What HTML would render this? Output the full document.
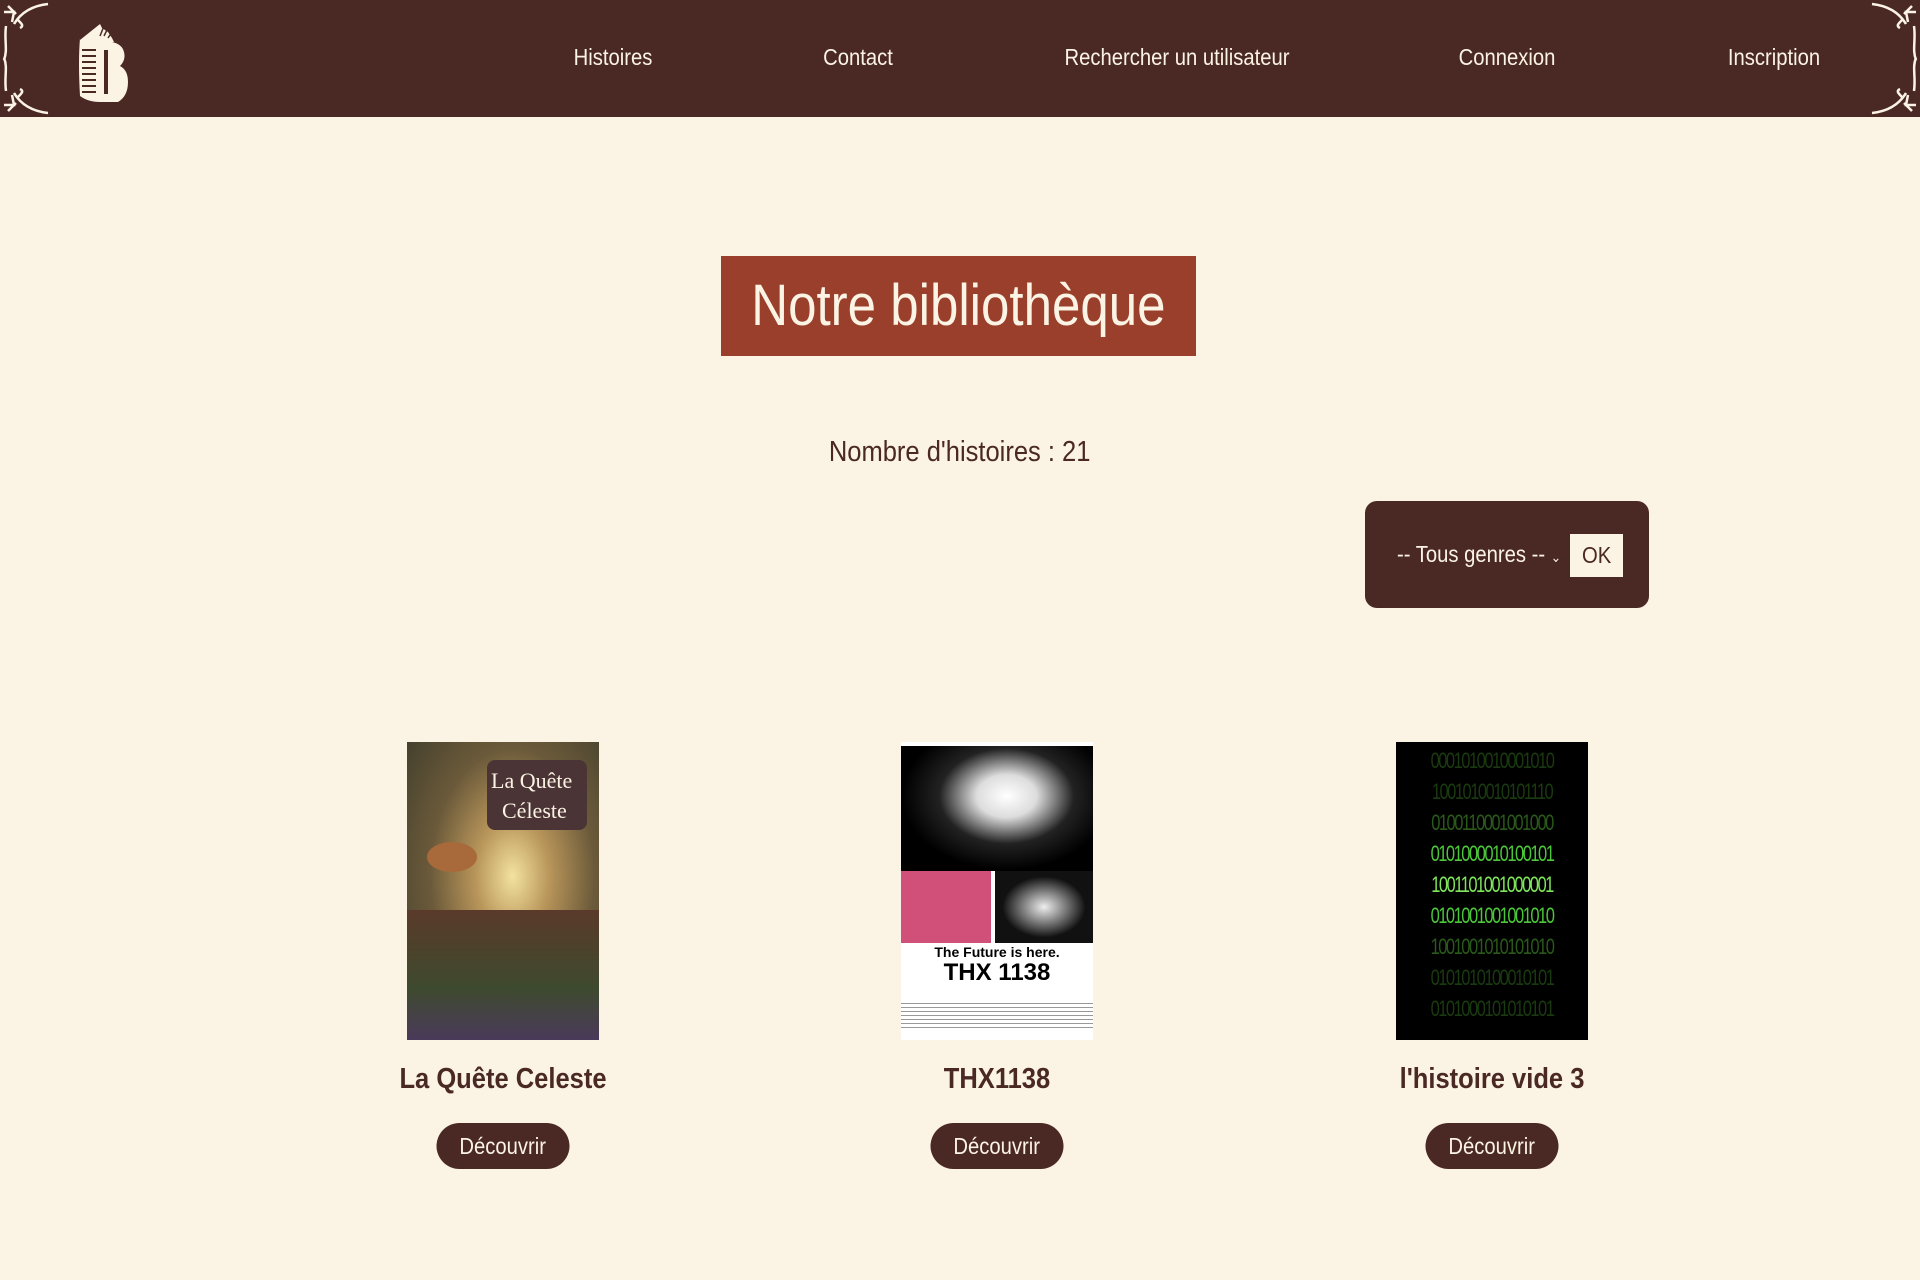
<!DOCTYPE html>
<html><head><meta charset="utf-8">
<style>
*{margin:0;padding:0;box-sizing:border-box}
body{width:1920px;height:1280px;background:#fbf3e4;font-family:"Liberation Sans",sans-serif;color:#4a2824;position:relative;overflow:hidden}
.n{display:inline-block;transform:scaleX(.88);transform-origin:center}
header{position:absolute;left:0;top:0;width:1920px;height:117px;background:#4a2824}
.nav{position:absolute;top:44px;color:#fbf3e4;font-size:23px;transform:translateX(-50%) scaleX(.88);white-space:nowrap}
.title{position:absolute;left:721px;top:256px;width:475px;height:100px;background:#9a3f2c;color:#fbf3e4;font-size:58px;text-align:center;line-height:100px;white-space:nowrap}
.count{position:absolute;left:0;width:1920px;top:436px;text-align:center;font-size:29px}
.filter{position:absolute;left:1365px;top:501px;width:284px;height:107px;background:#4a2824;border-radius:12px}
.filter .sel{position:absolute;left:32px;top:40px;color:#fbf3e4;font-size:23px;transform:scaleX(.88);transform-origin:left;white-space:nowrap}
.filter .ok{position:absolute;left:205px;top:33px;width:53px;height:43px;background:#fbf3e4;color:#4a2824;font-size:23px;text-align:center;line-height:43px}
.cover{position:absolute;top:742px;width:192px;height:298px;overflow:hidden}
.btitle{position:absolute;top:1063px;width:300px;text-align:center;font-size:29px;font-weight:bold;transform:translateX(-50%) scaleX(.88)}
.btn{position:absolute;top:1123px;width:133px;height:46px;border-radius:23px;background:#4a2824;color:#fbf3e4;font-size:23px;text-align:center;line-height:46px;transform:translateX(-50%)}
.bin{position:absolute;left:0;width:192px;text-align:center;font-family:"Liberation Sans",sans-serif;font-size:22px;letter-spacing:-2px;color:#1a3a10;transform:scaleX(.75);white-space:nowrap}
</style></head><body>
<header>
<svg style="position:absolute;left:0;top:0" width="50" height="117" viewBox="0 0 50 117" fill="none" stroke="#fbf3e4" stroke-width="2.5">
<path d="M48 4 C30 6 20 14 14 24 M8 6 L16 14 M4 12 L14 12 L12 22 M18 20 C22 24 24 26 20 28 M6 26 C4 40 8 50 4 60"/>
<path d="M48 113 C30 111 20 103 14 93 M8 111 L16 103 M4 105 L14 105 L12 95 M18 97 C22 93 24 91 20 89 M6 91 C4 77 8 67 4 58"/>
</svg>
<svg style="position:absolute;right:0;top:0;transform:scaleX(-1)" width="50" height="117" viewBox="0 0 50 117" fill="none" stroke="#fbf3e4" stroke-width="2.5">
<path d="M48 4 C30 6 20 14 14 24 M8 6 L16 14 M4 12 L14 12 L12 22 M18 20 C22 24 24 26 20 28 M6 26 C4 40 8 50 4 60"/>
<path d="M48 113 C30 111 20 103 14 93 M8 111 L16 103 M4 105 L14 105 L12 95 M18 97 C22 93 24 91 20 89 M6 91 C4 77 8 67 4 58"/>
</svg>
<svg style="position:absolute;left:78px;top:22px" width="52" height="80" viewBox="0 0 52 80">
<path d="M2 18 L22 2 L24 6 L30 10 L34 16 L36 20 L2 22 Z" fill="#fbf3e4"/>
<path d="M2 16 Q0 40 2 74 Q10 80 22 80 L40 80 Q50 74 50 60 Q50 48 42 44 Q48 38 46 30 Q44 22 34 20 L2 18 Z" fill="#fbf3e4"/>
<g stroke="#4a2824" stroke-width="2"><path d="M4 28 H18 M4 34 H18 M4 40 H18 M4 46 H18 M4 52 H18 M4 58 H18 M4 64 H18 M4 70 H18"/></g>
<path d="M26 28 L30 28 L30 72 L26 72 Z" fill="#4a2824"/>
<path d="M22 14 L26 4 M26 14 L30 6 M30 16 L34 10" stroke="#4a2824" stroke-width="1.5"/>
</svg>
<div class="nav" style="left:613px">Histoires</div>
<div class="nav" style="left:858px">Contact</div>
<div class="nav" style="left:1177px">Rechercher un utilisateur</div>
<div class="nav" style="left:1507px">Connexion</div>
<div class="nav" style="left:1774px">Inscription</div>
</header>
<div class="title"><span class="n">Notre bibliothèque</span></div>
<div class="count"><span class="n">Nombre d'histoires : 21</span></div>
<div class="filter"><div class="sel">-- Tous genres -- <span style="font-size:14px">&#8964;</span></div><div class="ok"><span class="n">OK</span></div></div>

<div class="cover" style="left:407px;background:radial-gradient(ellipse at 55% 45%,#f3e2a0 0%,#b8955a 25%,#6b5a3a 55%,#3b3a2a 100%)">
<div style="position:absolute;left:0;bottom:0;width:192px;height:130px;background:linear-gradient(#5a3a2a,#3e4a2e 60%,#4a3a5a)"></div>
<div style="position:absolute;left:20px;top:100px;width:50px;height:30px;border-radius:50%;background:#a86a3a"></div>
<div style="position:absolute;left:80px;top:18px;width:100px;height:70px;border-radius:8px;background:#4a3436;color:#fbf3e4;font-family:'Liberation Serif',serif;font-size:22px;line-height:30px;padding:6px 4px">La Quête<br>&nbsp;&nbsp;Céleste</div>
</div>

<div class="cover" style="left:901px;background:#fff">
<div style="position:absolute;left:0;top:4px;width:192px;height:125px;background:radial-gradient(ellipse at 55% 40%,#fff 0%,#ddd 20%,#222 45%,#000 70%)"></div>
<div style="position:absolute;left:0;top:129px;width:90px;height:72px;background:#d0507a"></div>
<div style="position:absolute;left:94px;top:129px;width:98px;height:72px;background:radial-gradient(#eee,#111 60%)"></div>
<div style="position:absolute;left:0;top:202px;width:192px;text-align:center;font-size:14px;font-weight:bold;color:#000">The Future is here.</div>
<div style="position:absolute;left:0;top:217px;width:192px;text-align:center;font-size:24px;font-weight:bold;color:#000">THX 1138</div>
<div style="position:absolute;left:0;top:258px;width:192px;height:30px;background:repeating-linear-gradient(#fff 0,#fff 3px,#999 3px,#999 4px)"></div>
</div>

<div class="cover" style="left:1396px;background:#000">
<div class="bin" style="top:6px">0001010010001010</div>
<div class="bin" style="top:37px">1001010010101110</div>
<div class="bin" style="top:68px;color:#2a5a1a">0100110001001000</div>
<div class="bin" style="top:99px;color:#4cc73a">0101000010100101</div>
<div class="bin" style="top:130px;color:#7fe65a">1001101001000001</div>
<div class="bin" style="top:161px;color:#4cc73a">0101001001001010</div>
<div class="bin" style="top:192px;color:#2a5a1a">1001001010101010</div>
<div class="bin" style="top:223px">0101010100010101</div>
<div class="bin" style="top:254px">0101000101010101</div>
</div>

<div class="btitle" style="left:503px">La Quête Celeste</div>
<div class="btitle" style="left:997px">THX1138</div>
<div class="btitle" style="left:1492px">l'histoire vide 3</div>
<div class="btn" style="left:503px"><span class="n">Découvrir</span></div>
<div class="btn" style="left:997px"><span class="n">Découvrir</span></div>
<div class="btn" style="left:1492px"><span class="n">Découvrir</span></div>
</body></html>
